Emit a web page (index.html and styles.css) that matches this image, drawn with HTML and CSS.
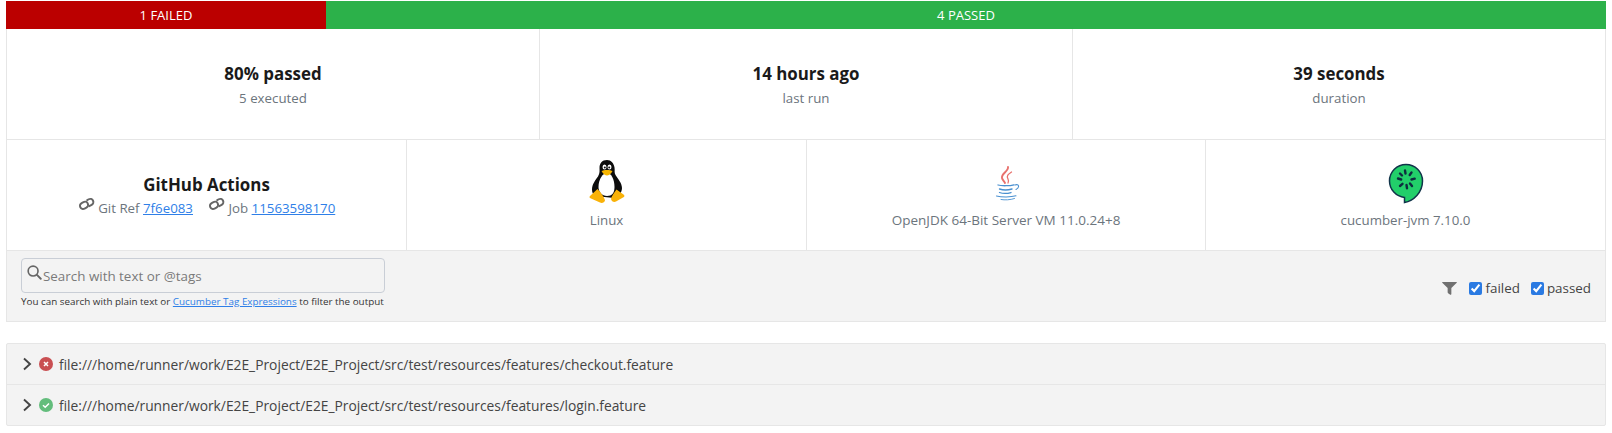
FILE: index.html
```html
<!DOCTYPE html>
<html lang="en">
<head>
<meta charset="utf-8">
<title>Cucumber report</title>
<link rel="stylesheet" href="styles.css">
</head>
<body>
<main class="report">
  <div class="bar">
    <div class="bar-seg bar-failed">1 FAILED</div>
    <div class="bar-seg bar-passed">4 PASSED</div>
  </div>
  <div class="stats">
    <div class="cell"><strong class="title">80% passed</strong><span class="sub">5 executed</span></div>
    <div class="cell"><strong class="title">14 hours ago</strong><span class="sub">last run</span></div>
    <div class="cell"><strong class="title">39 seconds</strong><span class="sub">duration</span></div>
  </div>
  <div class="meta">
    <div class="cell meta-cell">
      <strong class="title">GitHub Actions</strong>
      <div class="links">
        <span class="link-group"><svg class="link-icon" viewBox="0 0 24 20"><g fill="none" stroke="#666" stroke-width="2.800" stroke-linecap="round" transform="rotate(-28 12 10)"><rect x="2" y="5.5" width="12" height="9" rx="4.5"/><path d="M15.5 5.5h2.500a4.500 4.500 0 0 1 0 9h-4"/></g></svg> Git Ref <a href="#">7f6e083</a></span>
        <span class="link-group"><svg class="link-icon" viewBox="0 0 24 20"><g fill="none" stroke="#666" stroke-width="2.800" stroke-linecap="round" transform="rotate(-28 12 10)"><rect x="2" y="5.5" width="12" height="9" rx="4.5"/><path d="M15.5 5.5h2.500a4.500 4.500 0 0 1 0 9h-4"/></g></svg> Job <a href="#">11563598170</a></span>
      </div>
    </div>
    <div class="cell meta-cell">
      <svg class="logo" viewBox="0 0 36 44" width="36" height="44">
        <path d="M18 0c-5 0-7.500 3.500-7.500 8 0 3 .5 5-1.500 8.500-2.500 3.500-6 8-6 13 0 3 1 5 3 6.500L25 38c4-1 8-5 8-10 0-5-4.500-9.500-6.500-13C25 13 26 10 25.500 7.500 25 3.500 22 0 18 0z" fill="#0c0c0c"/>
        <path d="M18 13c-4 0-8.500 6-8.500 14 0 5 3.500 9 8.500 9s7.500-3 7.500-9c0-8-3.500-14-7.500-14z" fill="#fff"/>
        <ellipse cx="15.500" cy="7" rx="2" ry="2.600" fill="#fff"/><ellipse cx="20.500" cy="7" rx="2" ry="2.600" fill="#fff"/>
        <circle cx="15.800" cy="7.500" r="1" fill="#111"/><circle cx="20.200" cy="7.500" r="1" fill="#111"/>
        <path d="M12.500 11c2-1.500 9-1.500 11 0-1.500 3-4 4.500-5.500 4.500s-4-1.500-5.500-4.500z" fill="#f7b500"/>
        <path d="M8.500 29l-7.500 7c-1 1-.5 2 1 2.500l9 4c2 1 4.500 0 5-2-.5-3-4-8-7.500-11.500zM27.500 29.500c-2 3-5 6.500-5.500 9.500.5 2.500 3 3.500 5 2.500l7-4c1.500-.5 2-2 .5-3z" fill="#f9b208"/>
      </svg>
      <span class="sub">Linux</span>
    </div>
    <div class="cell meta-cell">
      <svg class="logo" viewBox="0 0 36 44" width="36" height="44">
        <g fill="none" stroke="#e8716d" stroke-linecap="round">
          <path d="M20 7c1 4-7 6.500-6 11 .4 2 2 3 3 5" stroke-width="1.900"/>
          <path d="M23.500 12c-3 2-5.500 3.500-3.500 7 .6 1.200 .8 2.500 0 4" stroke-width="1.300"/>
        </g>
        <g fill="none" stroke="#4a90d0" stroke-linecap="round">
          <path d="M10 25c3 1 12 1 16-.2" stroke-width="1.300"/>
          <path d="M11.500 29c3 1 9 1 12.500 0" stroke-width="1.400"/>
          <path d="M11.500 32.500c3 1 8 1 11.500 0" stroke-width="1.300"/>
          <path d="M8.500 36c5 1.300 14.500 1.300 19.500-.2" stroke-width="1.100"/>
          <path d="M13 39.500c4 .7 9 .5 13.500-1" stroke-width=".9"/>
          <path d="M27 25c4-1.500 5 2.500 1 4.500" stroke-width="1.100"/>
        </g>
      </svg>
      <span class="sub sub-wide">OpenJDK 64-Bit Server VM 11.0.24+8</span>
    </div>
    <div class="cell meta-cell">
      <svg class="logo" viewBox="0 0 36 44" width="36" height="44">
        <path d="M18 4.500a16.500 16.500 0 0 0-16.500 16.500c0 8.500 6.500 15.500 15 16.500v5c9-1.500 18-10 18-21.500A16.500 16.500 0 0 0 18 4.500z" fill="#22cf6a" stroke="#11344a" stroke-width="1.500"/>
        <g stroke="#0e2d3f" stroke-width="2.400" stroke-linecap="round">
          <path d="M17 10.500l.5 3M18.500 25l.5 3.300M10 18.500l3.200 1M23.500 19.500l3.200-.8M12 13.500l2 2M23.500 12.500l-1.800 2.500M12 26l2.500-2.200M22 23.500l2 2.500"/>
        </g>
      </svg>
      <span class="sub">cucumber-jvm 7.10.0</span>
    </div>
  </div>
  <div class="filter">
    <div class="search">
      <div class="search-box">
        <svg class="search-icon" viewBox="0 0 512 512"><path fill="none" stroke="#666" stroke-width="56" d="M208 40a168 168 0 1 0 0 336 168 168 0 0 0 0-336z"/><path stroke="#666" stroke-width="64" stroke-linecap="round" d="M340 340l130 130"/></svg>
        <span class="placeholder">Search with text or @tags</span>
      </div>
      <p class="help">You can search with plain text or <a href="#">Cucumber Tag Expressions</a> to filter the output</p>
    </div>
    <div class="status-filter">
      <svg class="funnel" viewBox="0 0 16 14"><path fill="#707070" d="M.5 0h15c.4 0 .6.500.3.800L10 6.500V13c0 .6-.5 1-1.200.6L6.500 12c-.3-.2-.5-.5-.5-.9V6.500L.2.800C-.1.500.1 0 .5 0z"/></svg>
      <label class="check"><input type="checkbox" checked>failed</label>
      <label class="check"><input type="checkbox" checked>passed</label>
    </div>
  </div>
  <section class="features">
    <div class="feature">
      <svg class="chevron" viewBox="0 0 10 14"><path d="M2 1.500 8 7l-6 5.500" fill="none" stroke="#444" stroke-width="1.900"/></svg>
      <svg class="status" viewBox="0 0 14 14"><circle cx="7" cy="7" r="7" fill="#c94f52"/><path d="M5 5l4 4M9 5l-4 4" stroke="#fff" stroke-width="1.500"/></svg>
      <span>file:///home/runner/work/E2E_Project/E2E_Project/src/test/resources/features/checkout.feature</span>
    </div>
    <div class="feature">
      <svg class="chevron" viewBox="0 0 10 14"><path d="M2 1.500 8 7l-6 5.500" fill="none" stroke="#444" stroke-width="1.900"/></svg>
      <svg class="status" viewBox="0 0 14 14"><circle cx="7" cy="7" r="7" fill="#63bd7c"/><path d="M4 7.200l2.200 2.100L10 5.400" fill="none" stroke="#fff" stroke-width="1.500"/></svg>
      <span>file:///home/runner/work/E2E_Project/E2E_Project/src/test/resources/features/login.feature</span>
    </div>
  </section>
</main>
</body>
</html>
```
FILE: styles.css
```css
* { box-sizing: border-box; }
html, body { height: 100%; }
body {
  margin: 0;
  padding: 1px 6px 0;
  background: #fff;
  color: #212529;
  font-family: "Open Sans", "Noto Sans", sans-serif;
  font-size: 13px;
  overflow: hidden;
}
.report { width: 1600px; }
.bar { display: flex; height: 28px; color: #fff; font-size: 13px; }
.bar-seg { display: flex; align-items: center; justify-content: center; }
.bar-failed { width: 320px; background: #bb0000; }
.bar-passed { flex: 1; background: #2cb14a; }
.stats, .meta {
  display: grid;
  border: 1px solid #e6e6e6;
  border-top: 0;
}
.stats { grid-template-columns: 532px 533px 533px; height: 111px; }
.meta { grid-template-columns: 399px 400px 399px 400px; height: 111px; }
.cell {
  display: flex;
  flex-direction: column;
  align-items: center;
  justify-content: center;
  border-left: 1px solid #e6e6e6;
}
.cell:first-child { border-left: 0; }
.stats .cell { padding-top: 2px; }
.title { font-size: 16.900px; font-weight: 700; color: #1a1a1a; line-height: 24px; margin-bottom: 2px; }
.meta .title { margin-bottom: 0; }
.sub { color: #6c757d; line-height: 20px; font-size: 13.300px; }
.sub-wide { font-size: 13.500px; }
.links { display: flex; gap: 15px; color: #6c757d; line-height: 20px; font-size: 13.300px; }
.link-group { white-space: nowrap; }
.link-icon { width: 17px; height: 14px; vertical-align: 2px; }
a { color: #2f7fe8; }
.logo { display: block; margin-bottom: 6px; }
.filter {
  display: flex;
  justify-content: space-between;
  align-items: flex-start;
  height: 71px;
  padding: 7px 14px 0 14px;
  background: #f3f3f3;
  border: 1px solid #e6e6e6;
  border-top: 0;
}
.search { width: 364px; }
.search-box {
  display: flex;
  align-items: center;
  height: 35px;
  padding: 0 5px;
  border: 1px solid #c9ced6;
  border-radius: 4px;
  font-size: 13.400px;
  color: #7a7a7a;
}
.search-icon { width: 15px; height: 15px; margin: -7px 1px 0 0; flex: none; }
.help { margin: 1px 0 0; font-size: 9.860px; color: #333; white-space: nowrap; }
.status-filter { display: flex; align-items: center; gap: 11px; padding-top: 21px; color: #444; font-size: 13.400px; }
.funnel { width: 15px; height: 13px; margin-right: 1px; }
.check { display: inline-flex; align-items: center; gap: 3px; }
.check input { width: 13px; height: 13px; margin: 0; accent-color: #2a7ae2; }
.features {
  margin-top: 21px;
  background: #f3f3f3;
  border: 1px solid #e6e6e6;
  border-radius: 2px;
  font-size: 13.800px;
}
.feature {
  display: flex;
  align-items: center;
  height: 40px;
  padding-left: 15px;
  color: #444;
}
.feature + .feature { height: 41px; border-top: 1px solid #e6e6e6; }
.chevron { width: 10px; height: 14px; margin-right: 7px; }
.status { width: 14px; height: 14px; margin-right: 6px; }
```
